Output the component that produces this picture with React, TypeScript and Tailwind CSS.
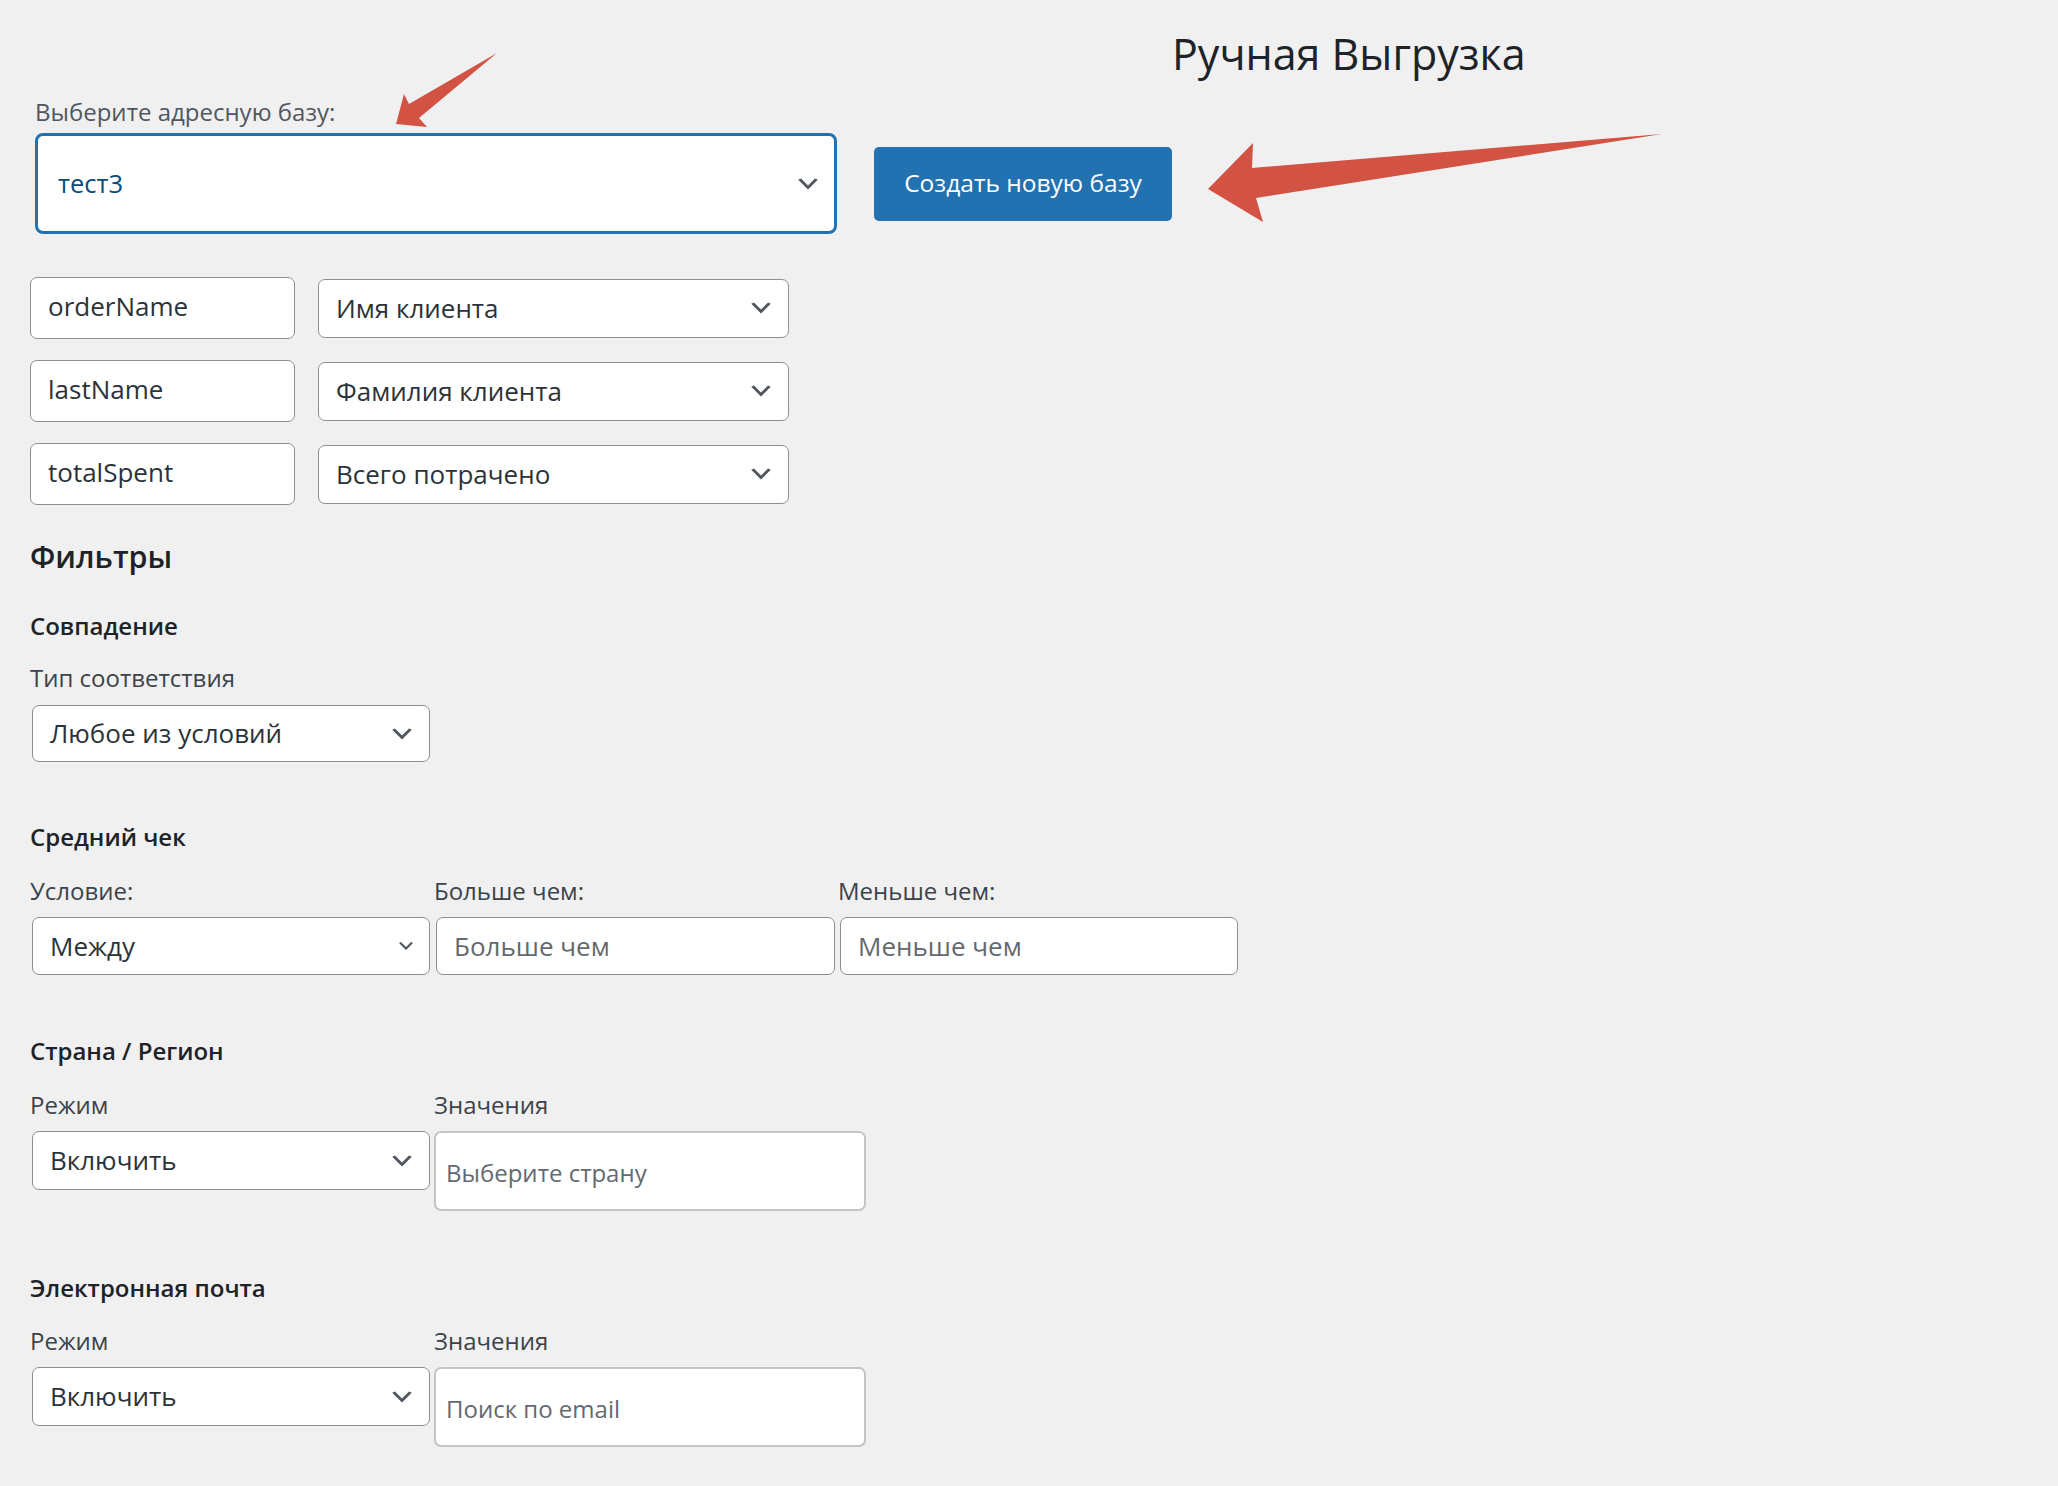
import React from "react";

const FONT = { fontFamily: '"Open Sans", "Noto Sans", sans-serif' };

function Chevron({ className = "w-[28px] h-[28px]" }: { className?: string }) {
  return (
    <svg viewBox="0 0 20 20" className={className} aria-hidden="true">
      <path d="M5 6l5 5 5-5 2 1-7 7-7-7 2-1z" fill="#50575e" />
    </svg>
  );
}

function SelectBox({
  value,
  className,
  chevron = "w-[28px] h-[28px]",
}: {
  value: string;
  className: string;
  chevron?: string;
}) {
  return (
    <div
      className={`flex items-center justify-between bg-white border border-[#8c8f94] rounded-[7px] pl-[17px] pr-[13px] text-[26px] text-[#2c3338] ${className}`}
    >
      <span>{value}</span>
      <Chevron className={chevron} />
    </div>
  );
}

function TextBox({ value, placeholder, className }: { value?: string; placeholder?: string; className: string }) {
  return (
    <div
      className={`flex items-center bg-white border border-[#8c8f94] rounded-[7px] pl-[17px] text-[26px] ${className}`}
    >
      {value ? <span className="text-[#2c3338]">{value}</span> : <span className="text-[#646970]">{placeholder}</span>}
    </div>
  );
}

function MultiBox({ placeholder }: { placeholder: string }) {
  return (
    <div className="flex items-center w-[432px] h-[80px] bg-white border-2 border-[#c3c4c7] rounded-[7px] pl-[10px] pt-[4px] text-[24px] text-[#646970]">
      {placeholder}
    </div>
  );
}

function Section({ title }: { title: string }) {
  return <div className="text-[24px] leading-[34px] font-semibold text-[#1d2327]">{title}</div>;
}

function Label({ children, className = "" }: { children: React.ReactNode; className?: string }) {
  return <div className={`text-[24px] leading-[34px] text-[#3c434a] ${className}`}>{children}</div>;
}

export default function App() {
  return (
    <div className="relative min-h-[1486px] bg-[#f0f0f1] pl-[30px] pt-[27px]" style={FONT}>
      <h1 className="ml-[1142px] h-[54px] leading-[54px] text-[43px] text-[#1d2327] whitespace-nowrap">
        Ручная Выгрузка
      </h1>

      <Label className="ml-[5px] mt-[14px] text-[#50575e]">Выберите адресную базу:</Label>
      <div className="flex items-center gap-[37px] mt-[4px] ml-[5px]">
        <div className="flex items-center justify-between w-[802px] h-[101px] bg-white border-[3px] border-[#2271b1] rounded-[8px] pl-[20px] pr-[12px] text-[25.5px] text-[#0a4b78]">
          <span>тест3</span>
          <Chevron />
        </div>
        <button className="w-[298px] h-[74px] rounded-[5px] bg-[#2271b1] text-white text-[24.5px]">
          Создать новую базу
        </button>
      </div>

      <div className="flex flex-col gap-[21px] mt-[43px]">
        {[
          ["orderName", "Имя клиента"],
          ["lastName", "Фамилия клиента"],
          ["totalSpent", "Всего потрачено"],
        ].map(([key, field]) => (
          <div key={key} className="flex items-center gap-[23px]">
            <TextBox value={key} className="w-[265px] h-[62px] pb-[4px]" />
            <SelectBox value={field} className="w-[471px] h-[59px] border-[1.5px]" />
          </div>
        ))}
      </div>

      <h2 className="mt-[31px] text-[30.5px] leading-[40px] font-semibold text-[#1d2327]">Фильтры</h2>

      <div className="mt-[33px]">
        <Section title="Совпадение" />
        <Label className="mt-[18px]">Тип соответствия</Label>
        <SelectBox value="Любое из условий" className="mt-[10px] ml-[2px] w-[398px] h-[57px] text-[26.8px]" />
      </div>

      <div className="mt-[58px]">
        <Section title="Средний чек" />
        <div className="flex mt-[20px]">
          <div className="w-[404px]">
            <Label>Условие:</Label>
            <SelectBox
              value="Между"
              className="mt-[9px] ml-[2px] w-[398px] h-[58px]"
              chevron="w-[20px] h-[20px]"
            />
          </div>
          <div className="w-[404px]">
            <Label>Больше чем:</Label>
            <TextBox placeholder="Больше чем" className="mt-[9px] ml-[2px] w-[399px] h-[58px]" />
          </div>
          <div className="w-[404px]">
            <Label>Меньше чем:</Label>
            <TextBox placeholder="Меньше чем" className="mt-[9px] ml-[2px] w-[398px] h-[58px]" />
          </div>
        </div>
      </div>

      <div className="mt-[59px]">
        <Section title="Страна / Регион" />
        <div className="flex mt-[20px]">
          <div className="w-[404px]">
            <Label>Режим</Label>
            <SelectBox value="Включить" className="mt-[9px] ml-[2px] w-[398px] h-[59px]" />
          </div>
          <div>
            <Label>Значения</Label>
            <div className="mt-[9px]">
              <MultiBox placeholder="Выберите страну" />
            </div>
          </div>
        </div>
      </div>

      <div className="mt-[60px]">
        <Section title="Электронная почта" />
        <div className="flex mt-[19px]">
          <div className="w-[404px]">
            <Label>Режим</Label>
            <SelectBox value="Включить" className="mt-[9px] ml-[2px] w-[398px] h-[59px]" />
          </div>
          <div>
            <Label>Значения</Label>
            <div className="mt-[9px]">
              <MultiBox placeholder="Поиск по email" />
            </div>
          </div>
        </div>
      </div>

      {/* annotation arrows drawn over the form */}
      <svg className="absolute left-0 top-0 pointer-events-none" width="2058" height="300" viewBox="0 0 2058 300">
        <polygon
          points="497,53 409,104 404,94 396,124 427,127 419,118"
          fill="#d25244"
        />
        <polygon
          points="1662,134 1252,168 1253,143 1208,189 1263,222 1256,198"
          fill="#d25244"
        />
      </svg>
    </div>
  );
}
